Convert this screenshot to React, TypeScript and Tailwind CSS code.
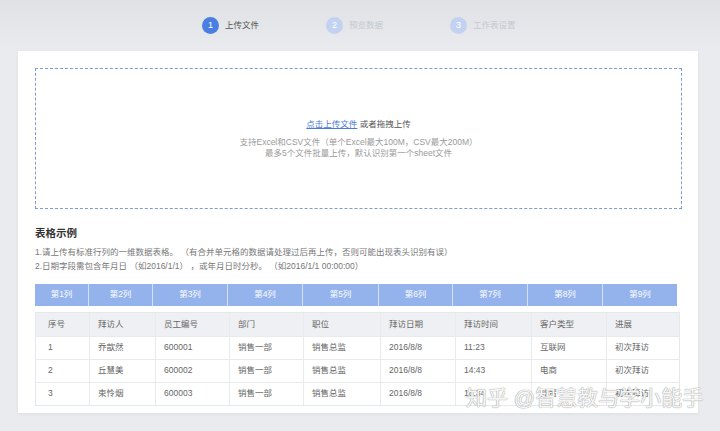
const font = { fontFamily: '"Liberation Sans", "Noto Sans CJK SC", sans-serif' };

const steps = [
  { n: 1, label: "上传文件", active: true },
  { n: 2, label: "预览数据", active: false },
  { n: 3, label: "工作表设置", active: false },
];

const headCols = ["第1列", "第2列", "第3列", "第4列", "第5列", "第6列", "第7列", "第8列", "第9列"];

const rows = [
  ["序号", "拜访人", "员工编号", "部门", "职位", "拜访日期", "拜访时间", "客户类型", "进展"],
  ["1", "乔歆然", "600001", "销售一部", "销售总监", "2016/8/8", "11:23", "互联网", "初次拜访"],
  ["2", "丘慧美", "600002", "销售一部", "销售总监", "2016/8/8", "14:43", "电商", "初次拜访"],
  ["3", "束怜烟", "600003", "销售一部", "销售总监", "2016/8/8", "16:34", "外贸", "初次拜访"],
];

export default function App() {
  return (
    <div className="relative h-[431px] w-[720px] overflow-hidden bg-[#e9ebee]" style={font}>
      <div className="flex h-[51px] items-center bg-gradient-to-b from-[#dfe1e4] to-[#e9ebee] pl-[202px]">
        {steps.map((s) => (
          <div key={s.n} className="flex w-[124px] items-center gap-[6px]">
            <div
              className={
                s.active
                  ? "flex h-[17px] w-[17px] items-center justify-center rounded-full bg-[#4a7ee0] text-[9px] text-white"
                  : "flex h-[17px] w-[17px] items-center justify-center rounded-full bg-[#c3d2f1] text-[9px] text-white"
              }
            >
              {s.n}
            </div>
            <span className={s.active ? "text-[8.5px] text-[#555]" : "text-[8.5px] text-[#c4c9d2]"}>{s.label}</span>
          </div>
        ))}
      </div>

      <div className="ml-[18px] h-[362px] w-[680px] bg-white pl-[17px] pt-[17px] shadow-[0_1px_3px_rgba(0,0,0,0.06)]">
        <div className="flex h-[141px] w-[647px] flex-col items-center justify-center border border-dashed border-[#7f9bd5]">
          <div className="text-[8.5px] text-[#555]">
            <span className="text-[#4a7ad8] underline">点击上传文件</span> 或者拖拽上传
          </div>
          <div className="mt-[6px] text-center text-[8.5px] leading-[11px] text-[#9a9a9a]">
            <div>支持Excel和CSV文件（单个Excel最大100M，CSV最大200M）</div>
            <div>最多5个文件批量上传，默认识别第一个sheet文件</div>
          </div>
        </div>

        <div className="mt-[17px] text-[10.5px] font-bold text-[#333]">表格示例</div>
        <div className="mt-[3px] text-[8.5px] leading-[14px] text-[#777]">
          <div>1.请上传有标准行列的一维数据表格。 （有合并单元格的数据请处理过后再上传，否则可能出现表头识别有误）</div>
          <div>2.日期字段需包含年月日 （如2016/1/1） ，或年月日时分秒。 （如2016/1/1 00:00:00）</div>
        </div>

        <div className="mt-[11px] grid h-[22px] w-[642px] grid-cols-[53px_64px_75px_75px_76px_74px_75px_75px_75px] bg-[#94b3ec]">
          {headCols.map((c, i) => (
            <div
              key={c}
              className={
                i === 0
                  ? "flex items-center justify-center text-[8.5px] text-white"
                  : "flex items-center justify-center border-l border-[#d6e1f7] text-[8.5px] text-white"
              }
            >
              {c}
            </div>
          ))}
        </div>

        <div className="mt-[6px] w-[645px] border border-[#e4e7eb]">
          {rows.map((r, ri) => (
            <div
              key={ri}
              className={
                ri === 0
                  ? "grid h-[23px] grid-cols-[53px_66px_74px_74px_77px_75px_76px_75px_75px] bg-[#eef0f3]"
                  : "grid h-[23px] grid-cols-[53px_66px_74px_74px_77px_75px_76px_75px_75px] border-t border-[#e8eaee] bg-white"
              }
            >
              {r.map((c, ci) => (
                <div
                  key={ci}
                  className={
                    ci === 0
                      ? "flex items-center pl-[12px] text-[8.5px] text-[#666]"
                      : "flex items-center border-l border-[#e8eaee] pl-[8px] text-[8.5px] text-[#666]"
                  }
                >
                  {c}
                </div>
              ))}
            </div>
          ))}
        </div>
      </div>

      <div
        className="absolute left-[466px] top-[384px] text-[21px] leading-[28px] text-white/90"
        style={{ textShadow: "0 0 1px #9a9a9a, 0 0 1px #9a9a9a" }}
      >
        知乎 @智慧教与学小能手
      </div>
    </div>
  );
}
